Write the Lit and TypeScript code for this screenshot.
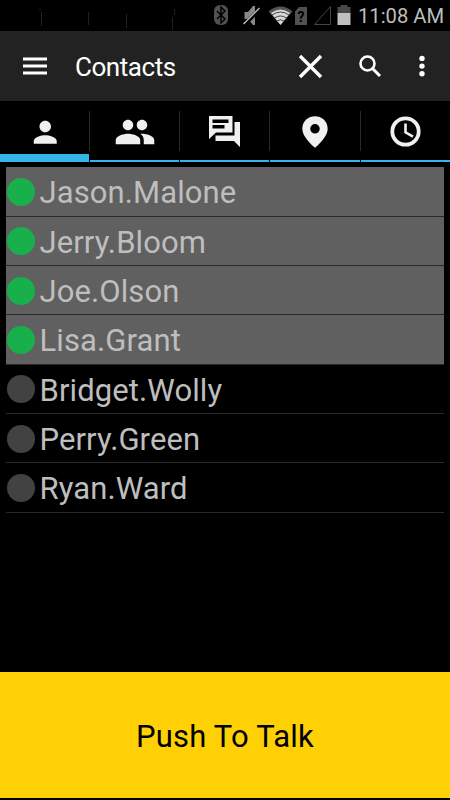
import { LitElement, html, css, svg } from "lit";
import { customElement, state } from "lit/decorators.js";
import { classMap } from "lit/directives/class-map.js";

interface Contact {
  name: string;
  online: boolean;
}

const person = svg`<svg width="34.5" height="34.5" viewBox="0 0 24 24"><path d="M12 12c2.21 0 4-1.79 4-4s-1.79-4-4-4-4 1.79-4 4 1.79 4 4 4zm0 2c-2.67 0-8 1.34-8 4v2h16v-2c0-2.66-5.33-4-8-4z"/></svg>`;
const group = svg`<svg width="42" height="42" viewBox="0 0 24 24"><path d="M16 11c1.66 0 2.99-1.34 2.99-3S17.66 5 16 5s-3 1.34-3 3 1.34 3 3 3zm-8 0c1.66 0 2.99-1.34 2.99-3S9.66 5 8 5 5 6.34 5 8s1.34 3 3 3zm0 2c-2.33 0-7 1.17-7 3.5V19h14v-2.5c0-2.33-4.67-3.5-7-3.5zm8 0c-.29 0-.62.02-.97.05 1.16.84 1.97 1.97 1.97 3.45V19h6v-2.5c0-2.33-4.67-3.5-7-3.5z"/></svg>`;
const chat = svg`<svg width="32" height="32" viewBox="0 0 32 32"><path fill-rule="evenodd" d="M0 0h23.500v16.500H7L0 23zM3.500 3.500v3.500h16V3.500zM3.500 9v3.500h12V9z"/><path d="M25.500 6h5.500v25l-6-6H6.500v-5.500h19z"/></svg>`;
const pin = svg`<svg width="38" height="38" viewBox="0 0 24 24"><path d="M12 2C7.800 2 4 5 4 9.900c0 3.300 2.700 7.500 8 12.100 5.300-4.600 8-8.800 8-12.100C20 5 16.200 2 12 2zm0 11a3 3 0 1 1 0-6 3 3 0 0 1 0 6z"/></svg>`;
const clock = svg`<svg width="32" height="32" viewBox="0 0 32 32"><circle cx="15.5" cy="15.5" r="13.2" fill="none" stroke="#f0f0f0" stroke-width="3.8"/><path d="M15.500 7.500v8.800l7.500 4.400" fill="none" stroke="#f0f0f0" stroke-width="2.6"/></svg>`;

@customElement("app-root")
export class AppRoot extends LitElement {
  @state() private contacts: Contact[] = [
    { name: "Jason.Malone", online: true },
    { name: "Jerry.Bloom", online: true },
    { name: "Joe.Olson", online: true },
    { name: "Lisa.Grant", online: true },
    { name: "Bridget.Wolly", online: false },
    { name: "Perry.Green", online: false },
    { name: "Ryan.Ward", online: false },
  ];
  @state() private active = 0;

  static styles = css`
    :host {
      display: flex;
      flex-direction: column;
      width: 450px;
      height: 800px;
      overflow: hidden;
      background: #000;
      font-family: Roboto, "Liberation Sans", sans-serif;
    }
    svg { display: block; flex: none; }
    .status {
      height: 31px;
      flex: none;
      display: flex;
    }
    .time {
      margin-left: 5px;
      font-size: 20.2px;
      line-height: 33px;
      color: #bebebe;
      white-space: nowrap;
    }
    .bar {
      height: 70px;
      flex: none;
      box-sizing: border-box;
      padding-left: 23px;
      background: #222;
      display: flex;
      align-items: center;
    }
    .title {
      width: 222.5px;
      margin: 2px 0 0 28px;
      font-size: 26px;
      letter-spacing: -0.45px;
      font-weight: 400;
      color: #fff;
    }
    .search { margin-left: 35.5px; }
    .more { margin-left: 37px; }
    .tabs {
      height: 61px;
      flex: none;
      display: grid;
      grid-template-columns: 89px 90px 90px 91px 90px;
    }
    .tab {
      display: flex;
      align-items: center;
      justify-content: center;
      box-sizing: border-box;
      padding: 1px 0 0 1px;
      fill: #f0f0f0;
      background:
        linear-gradient(#2a2a2a, #2a2a2a) 0 10px / 1px 40px no-repeat,
        linear-gradient(#33b5e5, #33b5e5) 1px 100% / 100% 2px no-repeat;
    }
    .tab.active {
      background: linear-gradient(#33b5e5, #33b5e5) 0 100% / 100% 8px no-repeat;
    }
    .list {
      flex: 1;
      margin: 0;
      padding: 5.3px 6px 0;
      list-style: none;
    }
    .row {
      height: 49.33px;
      box-sizing: border-box;
      border-bottom: 1px solid #292929;
      display: flex;
      align-items: center;
      font-size: 31px;
      letter-spacing: 0.1px;
      color: #bebebe;
    }
    .row.online { background: #606060; }
    .dot {
      width: 28px;
      height: 28px;
      margin: 1px 4.5px 0 1px;
      border-radius: 50%;
      background: #424242;
      flex: none;
    }
    .online .dot { background: #18b04b; }
    .name { padding-top: 3px; }
    .talk {
      height: 126px;
      flex: none;
      margin-bottom: 2px;
      padding: 3px 0 0;
      border: 0;
      background: #ffd105;
      color: #000;
      font: 31px Roboto, "Liberation Sans", sans-serif;
      letter-spacing: 0.2px;
    }
  `;

  private renderStatus() {
    return html`<div class="status">
      <svg width="353" height="31" viewBox="0 0 353 31">
        <path d="M39 9.500h2M41.500 12v14M88.500 12v13M126.500 14v14M174.500 9v6M172.500 17v13" stroke="#202020" fill="none"/>
        <rect x="214" y="5" width="14" height="20" rx="6" fill="#515151"/>
        <path d="M217 11l8 8-4 4V7l4 4-8 8" fill="none" stroke="#000" stroke-width="1.5"/>
        <path d="M244.500 12h3.500l5-6h2v19h-2l-5-6h-3.500z" fill="#888"/>
        <path d="M244 25l16-16" stroke="#000" stroke-width="4"/>
        <path d="M243.500 24l16-16" stroke="#bbb" stroke-width="1.5"/>
        <path d="M268.500 11.500q12-10 24 0L280.500 25z" fill="#555"/>
        <path d="M271 13q9.500-7 19 0L280.500 25z" fill="#d8d8d8"/>
        <path d="M272 15q8.500-6 17 0M274.500 18q6-4 12 0M277 21q3.500-2.500 7 0" fill="none" stroke="#333" stroke-width="0.9"/>
        <path d="M299 7h8v18h-12V11.500z" fill="#515151"/>
        <text x="301" y="22" text-anchor="middle" font-size="14" font-weight="700" fill="#000">?</text>
        <path d="M314.500 24.500h16v-18z" fill="none" stroke="#444"/>
        <path d="M337.500 7h3V5h7v2h3v6h-13z" fill="#484848"/>
        <path d="M337.500 13h13v12h-13z" fill="#c0c0c0"/>
      </svg>
      <span class="time">11:08 AM</span>
    </div>`;
  }

  render() {
    return html`
      ${this.renderStatus()}
      <header class="bar">
        <svg width="24" height="19" viewBox="0 0 24 19"><path d="M0 2h24M0 9h24M0 16h24" stroke="#fff" stroke-width="2.9"/></svg>
        <span class="title">Contacts</span>
        <svg width="25" height="25" viewBox="0 0 25 25"><path d="M2 2l21 21M23 2L2 23" stroke="#fff" stroke-width="3.4"/></svg>
        <svg class="search" width="24" height="24" viewBox="0 0 24 24"><circle cx="9.5" cy="9.5" r="7" fill="none" stroke="#fff" stroke-width="2.6"/><path d="M14.500 14.500l7.500 7.500" stroke="#fff" stroke-width="3"/></svg>
        <svg class="more" width="6" height="22" viewBox="0 0 6 22" fill="#fff"><circle cx="3" cy="3.4" r="2.7"/><circle cx="3" cy="11.1" r="2.7"/><circle cx="3" cy="18.7" r="2.7"/></svg>
      </header>
      <nav class="tabs">
        ${[person, group, chat, pin, clock].map(
          (icon, i) => html`<div class=${classMap({ tab: true, active: i === this.active })} @click=${() => (this.active = i)}>${icon}</div>`
        )}
      </nav>
      <ul class="list">
        ${this.contacts.map(
          (c) => html`<li class=${classMap({ row: true, online: c.online })}><span class="dot"></span><span class="name">${c.name}</span></li>`
        )}
      </ul>
      <button class="talk">Push To Talk</button>
    `;
  }
}
